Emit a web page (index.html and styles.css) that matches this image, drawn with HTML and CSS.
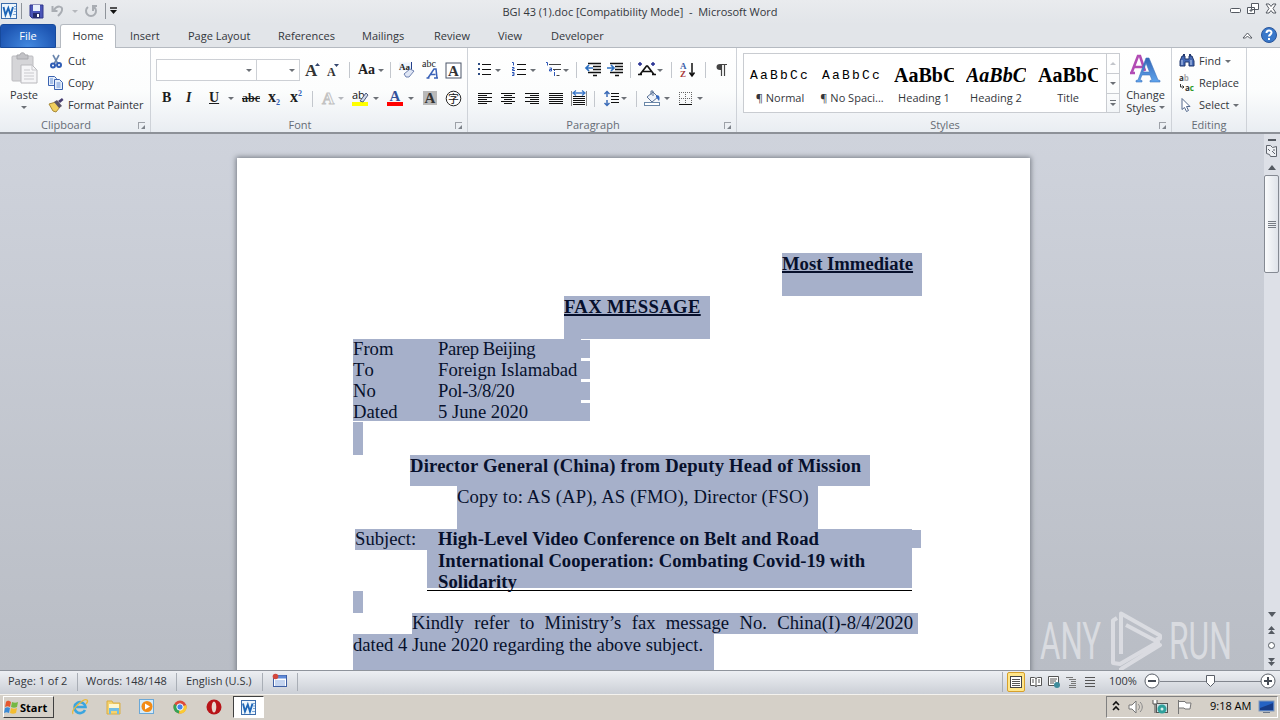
FILE: index.html
```html
<!DOCTYPE html>
<html lang="en">
<head>
  <meta charset="UTF-8" />
  <meta name="viewport" content="width=device-width, initial-scale=1.0"/>
  <title>BGI 43 (1).doc [Compatibility Mode] - Microsoft Word</title>
  <link rel="stylesheet" href="styles.css">
</head>
<body>
  <!-- Title bar -->
  <header class="titlebar">
    <div class="quick">
      <svg width="17" height="17" viewBox="0 0 17 17"><rect x="1.500" y=".5" width="15" height="15" fill="#eef6fc" stroke="#3b6cab"/><path d="M14 3.500h2M14 6h2M14 8.500h2M13 11.500h3" stroke="#7aa6d8"/><path d="M3.500 4l2 8L8.300 5l2.200 7 2.500-8" fill="none" stroke="#1d66b8" stroke-width="1.900"/></svg>
      <i class="sep"></i>
      <svg width="15" height="15" viewBox="0 0 15 15"><path d="M1 1h13v13H3l-2-2z" fill="#4a55b8" stroke="#30378a"/><path d="M4 1h7v6H4z" fill="#e8f0fb"/><path d="M4 9h7v5H4z" fill="#252c6c"/><path d="M8 10h2v3H8z" fill="#fff"/></svg>
      <svg width="14" height="14" viewBox="0 0 14 14"><path d="M1.500 2v5h5M3 6c3-5 9-4 8 0 0 2-2 4-4 6" fill="none" stroke="#a9adb3" stroke-width="2"/></svg>
      <i class="drop light"></i>
      <svg width="14" height="14" viewBox="0 0 14 14"><path d="M4 3a5 5 0 1 0 6 0M9 7V2h4" fill="none" stroke="#a9adb3" stroke-width="2"/></svg>
      <i class="sep"></i>
      <svg width="8" height="8" viewBox="0 0 8 8"><path d="M1 1h7" stroke="#111" stroke-width="1.4"/><path d="M1 3h7L4.500 7z" fill="#111"/></svg>
    </div>
    <div class="title">BGI 43 (1).doc [Compatibility Mode] &nbsp;-&nbsp; Microsoft Word</div>
    <svg class="winbuttons" width="50" height="14" viewBox="0 0 50 14" fill="#fff" stroke="#555a62"><rect x="0.500" y="5.500" width="10" height="4" rx="1"/><path d="M21.500.5h7v6h-7zM17.500 4.500h7v6h-7z"/><path d="M20 7h2v1h-2z"/><path d="M36 1h3l2 2.500L43 1h3l-3 4.500 3 4.500h-3l-2-2.500-2 2.500h-3l3-4.500z"/></svg>
  </header>

  <nav class="tabs">
    <span class="file">File</span>
    <span class="home">Home</span>
    <span>Insert</span>
    <span class="t-page">Page Layout</span>
    <span class="t-ref">References</span>
    <span>Mailings</span>
    <span>Review</span>
    <span>View</span>
    <span>Developer</span>
    <svg class="help" width="38" height="18" viewBox="0 0 38 18"><path d="M1 12l4.500-5L10 12H7.500l-2-2-2 2z" fill="#fff" stroke="#555a62"/><circle cx="27" cy="9" r="7.500" fill="#3978ca" stroke="#2a569b"/><path d="M24.500 7c0-3.500 5-3.300 5-.4 0 2-2.500 2-2.500 4M27 12v2" fill="none" stroke="#fff" stroke-width="2"/></svg>
  </nav>

  <!-- Ribbon -->
  <section class="ribbon">
    <div class="group clipboard">
      <div class="tools">
        <div class="paste">
          <svg width="27" height="31" viewBox="0 0 27 31"><rect x="1" y="3" width="21" height="25" rx="1" fill="#d5d5d8" stroke="#bcbcc0"/><path d="M6 2h3c0-3 5-3 5 0h3v4H6z" fill="#c2c2c6" stroke="#a9a9ad"/><path d="M10 12h11l5 5v13H10z" fill="#f5f5f7" stroke="#b9b9bd"/><path d="M21 12v5h5M13 17h6M13 20h10M13 23h10M13 26h10" stroke="#c9c9cd" fill="none"/></svg>
          <span>Paste</span>
          <i class="drop"></i>
        </div>
        <div class="stack">
          <div><svg width="16" height="16" viewBox="0 0 16 16"><path d="M5 2l5 9M11 2l-5 9" stroke="#6c87ae" stroke-width="1.600"/><circle cx="5" cy="12.500" r="2" fill="none" stroke="#2f5db5" stroke-width="2"/><circle cx="11" cy="12" r="2" fill="none" stroke="#2f5db5" stroke-width="2"/></svg>Cut</div>
          <div><svg width="16" height="16" viewBox="0 0 16 16" fill="#e6effb" stroke="#3a62b0"><path d="M.5 1.500h6l2 2v7h-8z"/><path d="M6.500 4.500h5l3 3v7h-8z"/><path d="M2 4h3M2 6h3M2 8h3M8.500 8h4M8.500 10h4M8.500 12h4" stroke="#6a92d4"/></svg>Copy</div>
          <div class="painter"><svg width="16" height="16" viewBox="0 0 16 16"><path d="M1 7l7-2 4 5-4 5-3-1z" fill="#f0cf5e" stroke="#a88a3a"/><path d="M6 5l3-2 5 6-3 2z" fill="#5a5468"/><path d="M10 4l4-3 1.500 2L12 6z" fill="#463d70"/></svg>Format Painter</div>
        </div>
      </div>
      <div class="label">Clipboard<i class="launcher"></i></div>
    </div>

    <div class="group font">
      <div class="tools rows">
        <div class="row font-top">
          <div class="combo"><i class="drop"></i></div>
          <div class="combo"><i class="drop"></i></div>
          <svg width="17" height="18" viewBox="0 0 17 18"><text x="0" y="15" class="svg-serif" font-size="17" font-weight="bold" fill="#333">A</text><path d="M10 5l2.500-3L15 5z" fill="#34466e"/></svg>
          <svg width="17" height="18" viewBox="0 0 17 18"><text x="0" y="15" class="svg-serif" font-size="12" font-weight="bold" fill="#333">A</text><path d="M7 3h5L9.500 6z" fill="#34466e"/></svg>
          <i class="sep"></i>
          <span class="serif aa">Aa</span>
          <i class="drop"></i>
          <i class="sep"></i>
          <svg width="17" height="18" viewBox="0 0 17 18"><path d="M1 1.500h12v8H1z" fill="#eef3fb"/><text x="1" y="9" class="svg-serif" font-size="9" font-weight="bold" fill="#222">Aa</text><path d="M13.500 1v8" stroke="#24408a"/><path d="M6 13l6-5 4 2-5 6H8z" fill="#dfe6f5" stroke="#6f82b0"/></svg>
          <svg width="17" height="18" viewBox="0 0 17 18"><text x="0" y="6" class="svg-serif" font-size="10" fill="#222">abc</text><path d="M6 17l6-9h2l1 9M8.500 13.500h5M4.500 17h3M12 17h4" fill="none" stroke="#3a62b8" stroke-width="1.500"/></svg>
          <svg width="17" height="17" viewBox="0 0 17 17"><rect x="1" y="1" width="15" height="15" fill="#fff" stroke="#4a5568"/><text x="3" y="13.500" class="svg-serif" font-size="15" font-weight="bold" fill="#333">A</text></svg>
        </div>
        <div class="row font-bottom">
          <span class="serif">B</span>
          <span class="serif italic">I</span>
          <span class="serif under">U</span>
          <i class="drop"></i>
          <span class="serif strike">abc</span>
          <span class="serif ex">x<sub>2</sub></span>
          <span class="serif ex">x<sup>2</sup></span>
          <i class="sep"></i>
          <svg width="16" height="17" viewBox="0 0 16 17"><text x="1" y="14" class="svg-serif" font-size="17" font-weight="bold" fill="#fafafa" stroke="#c2c2c2" stroke-width="1">A</text></svg>
          <i class="drop light"></i>
          <svg width="17" height="17" viewBox="0 0 17 17"><rect y="12" width="16" height="4" fill="#ff0"/><text x="0" y="9" class="svg-sans" font-size="11" fill="#111">ab</text><path d="M8 11l6-8 2 2-5 7z" fill="#cfd8ea" stroke="#506080"/></svg>
          <i class="drop"></i>
          <svg width="17" height="17" viewBox="0 0 17 17"><rect y="12" width="16" height="4" fill="#f00"/><text x="2.500" y="11" class="svg-serif" font-size="15" font-weight="bold" fill="#34519a">A</text></svg>
          <i class="drop"></i>
          <svg width="15" height="15" viewBox="0 0 15 15"><path d="M0 0h14v14H0z" fill="#b9b9b9"/><text x="1.500" y="12" class="svg-serif" font-size="15" font-weight="bold" fill="#333">A</text></svg>
          <svg width="17" height="17" viewBox="0 0 17 17"><circle cx="8.500" cy="8.500" r="7.300" fill="#fff" stroke="#222"/><text x="3" y="12.500" class="svg-cjk" font-size="11" fill="#111">字</text></svg>
        </div>
      </div>
      <div class="label">Font<i class="launcher"></i></div>
    </div>

    <div class="group paragraph">
      <div class="tools rows">
        <div class="row para-top">
          <svg width="16" height="16" viewBox="0 0 16 16"><path d="M1 1h2v2H1zM1 6h2v2H1zM1 11h2v2H1z" fill="#2c4a80"/><path d="M5 2.500h9M5 7.500h9M5 12.500h9" stroke="#111"/></svg>
          <i class="drop"></i>
          <svg width="16" height="16" viewBox="0 0 16 16"><path d="M1 .5h1.500v3M1 5.500h2v1.500H1.500v1.500H4M1 10.500h2v3H1M1.500 12H3" fill="none" stroke="#2c56b8"/><path d="M6 2.500h9M6 7.500h9M6 12.500h9" stroke="#111"/></svg>
          <i class="drop"></i>
          <svg width="18" height="16" viewBox="0 0 18 16"><path d="M1 .5h1.500v3M4.500 6h2v3h-2V7.500h2M9.500 10v4M9.500 8v1" fill="none" stroke="#2c56b8"/><path d="M4 2.500h12M8 7.500h8M11.500 13.500h3" stroke="#444"/></svg>
          <i class="drop"></i>
          <i class="sep"></i>
          <svg width="17" height="16" viewBox="0 0 17 16"><path d="M3 1.500h13M8 4.500h8M8 7.500h8M3 10.500h13M8 13.500h4" stroke="#111" stroke-width="1.500"/><path d="M8 6H2M4 3L1 6l3 3" fill="none" stroke="#2c6fc0" stroke-width="1.700"/></svg>
          <svg width="17" height="16" viewBox="0 0 17 16"><path d="M3 1.500h13M8 4.500h8M8 7.500h8M3 10.500h13M8 13.500h4" stroke="#111" stroke-width="1.500"/><path d="M0 6h6M4 3l3 3-3 3" fill="none" stroke="#2c6fc0" stroke-width="1.700"/></svg>
          <i class="sep"></i>
          <svg width="19" height="16" viewBox="0 0 19 16"><path d="M0 12.500h4M14 12.500h4M2 12.500L8.500 4h1L16 12.500M5 9.500h8" fill="none" stroke="#111" stroke-width="1.700"/><path d="M0 2h4M2 0v4M13 2h4M15 0v4" stroke="#202a90" stroke-width="1.400"/></svg>
          <i class="drop"></i>
          <i class="sep"></i>
          <svg width="16" height="18" viewBox="0 0 16 18"><text x="0" y="8" class="svg-serif" font-size="9" font-weight="bold" fill="#3c62aa">A</text><text x="0" y="16" class="svg-serif" font-size="9" font-weight="bold" fill="#a83a3a">Z</text><path d="M12 2v12M9.500 11.500L12 15l2.500-3.500" fill="none" stroke="#111" stroke-width="1.500"/></svg>
          <i class="sep"></i>
          <svg width="12" height="15" viewBox="0 0 12 15"><path d="M8 1H4a3.500 3 0 0 0 0 6h1V1" fill="#444"/><path d="M4 1.500h7M5.500 1v12M8.500 1v12" fill="none" stroke="#444" stroke-width="1.200"/></svg>
        </div>
        <div class="row para-bottom">
          <svg width="16" height="14" viewBox="0 0 16 14"><path d="M0 1.500h14M0 3.500h9M0 5.500h14M0 7.500h9M0 9.500h14M0 11.500h9" stroke="#111"/></svg>
          <svg width="16" height="14" viewBox="0 0 16 14"><path d="M0 1.500h14M3 3.500h8M0 5.500h14M3 7.500h8M0 9.500h14M3 11.500h8" stroke="#111"/></svg>
          <svg width="16" height="14" viewBox="0 0 16 14"><path d="M0 1.500h14M5 3.500h9M0 5.500h14M5 7.500h9M0 9.500h14M5 11.500h9" stroke="#111"/></svg>
          <svg width="16" height="14" viewBox="0 0 16 14"><path d="M0 1.500h14M0 3.500h14M0 5.500h14M0 7.500h14M0 9.500h14M0 11.500h14" stroke="#111"/></svg>
          <svg width="17" height="17" viewBox="0 0 17 17"><path d="M.5 1v15M15.500 1v15" stroke="#888"/><path d="M2 3h12M5 .5L2 3l3 2.500M11 .5L14 3l-3 2.500" fill="none" stroke="#3c78c8" stroke-width="1.300"/><path d="M2 6.500h12M2 8.500h12M2 10.500h12M2 12.500h12M2 14.500h12" stroke="#111"/></svg>
          <i class="sep"></i>
          <svg width="16" height="17" viewBox="0 0 16 17"><path d="M3 1v6M.5 4L3 1.500 5.500 4M3 10v6M.5 13L3 15.500 5.500 13" fill="none" stroke="#3c6cb8" stroke-width="1.500"/><path d="M7 3.500h8M7 6.500h8M7 9.500h8M7 12.500h8" stroke="#111"/></svg>
          <i class="drop"></i>
          <i class="sep"></i>
          <svg width="17" height="17" viewBox="0 0 17 17"><path d="M3 7l6-5 5 5-6 5z" fill="#eef3fa" stroke="#5a7296"/><path d="M7 5V1h2v5" fill="none" stroke="#5a7296"/><path d="M12 5c4 0 4 3 3 6l-3-4z" fill="#3568bd"/><rect x=".5" y="12.500" width="15" height="3" fill="#fff" stroke="#6a87a8"/></svg>
          <i class="drop"></i>
          <svg width="15" height="15" viewBox="0 0 15 15"><path d="M1.500 1v12M7.500 1v12M13.500 1v12M1 1.500h13M1 7.500h13" stroke="#666" stroke-dasharray="1 1"/><path d="M1 13.500h13" stroke="#111"/></svg>
          <i class="drop"></i>
        </div>
      </div>
      <div class="label">Paragraph<i class="launcher"></i></div>
    </div>

    <div class="group styles">
      <div class="tools">
        <div class="gallery">
          <div class="style"><b class="normal">AaBbCc</b><span>¶ Normal</span></div>
          <div class="style"><b class="normal">AaBbCc</b><span>¶ No Spaci...</span></div>
          <div class="style"><b>AaBbC</b><span>Heading 1</span></div>
          <div class="style"><b class="h2">AaBbCc</b><span>Heading 2</span></div>
          <div class="style"><b>AaBbC</b><span>Title</span></div>
        </div>
        <div class="gallery-scroll"><div><i class="drop up"></i></div><div><i class="drop"></i></div><div><i class="drop more"></i></div></div>
        <div class="change">
          <svg width="31" height="30" viewBox="0 0 31 30"><defs><linearGradient id="blueA" x2="0" y2="1"><stop offset="0" stop-color="#3465b4"/><stop offset="1" stop-color="#5fa5ee"/></linearGradient></defs><path d="M1.500 19L8 2h2l5 15M4 13h9M0 19h5" fill="none" stroke="#b24cb4" stroke-width="2.600"/><path d="M6 28h6v-1.500l-2-.5 2-5h8l2 5-2 .5V28h10v-1.500l-2-.5L19 4h-3L8 26l-2 .5zM13 18l3-9 3.500 9z" fill="url(#blueA)" stroke="#3c72bd" stroke-width=".6" fill-rule="evenodd"/></svg>
          <span>Change</span>
          <span>Styles <i class="drop"></i></span>
        </div>
      </div>
      <div class="label">Styles<i class="launcher"></i></div>
    </div>

    <div class="group editing">
      <div class="tools">
        <div class="stack">
          <div><svg width="16" height="16" viewBox="0 0 16 16"><path d="M3 3h3v3h4V3h3l2 5v5h-5V9H6v4H1V8z" fill="#4468b4" stroke="#23386e"/><path d="M4 1h2v2H4zM10 1h2v2h-2z" fill="#23386e"/><path d="M3 7v5M12 7v5" stroke="#c5d5f2"/></svg>Find<i class="drop"></i></div>
          <div><svg width="16" height="16" viewBox="0 0 16 16"><text x="0" y="6" class="svg-sans" font-size="8" font-weight="bold" fill="#333">a<tspan fill="#aaa">b</tspan></text><text x="6" y="16" class="svg-sans" font-size="8" font-weight="bold" fill="#333">a<tspan fill="#2a9a2a">c</tspan></text><path d="M1.500 9v3H5M3.500 10.500L5 12l-1.500 1.500" fill="none" stroke="#333"/></svg>Replace</div>
          <div><svg width="16" height="16" viewBox="0 0 16 16"><path d="M3 1.500v11l2.500-2 2 4 2-1-2-4H11z" fill="#fff" stroke="#54698e"/></svg>Select<i class="drop"></i></div>
        </div>
      </div>
      <div class="label">Editing</div>
    </div>
  </section>

  <!-- Document -->
  <main class="workspace">
    <div class="canvas">
      <article class="page">
        <h1 class="sel immediate"><u>Most Immediate</u></h1>
        <h2 class="sel fax"><u>FAX MESSAGE</u></h2>
        <div class="details">
          <div class="sel detail"><span>From</span><span class="parep">Parep Beijing</span></div>
          <div class="sel detail"><span class="to">To</span><span>Foreign Islamabad</span></div>
          <div class="sel detail"><span>No</span><span class="pol">Pol-3/8/20</span></div>
          <div class="sel detail"><span>Dated</span><span>5 June 2020</span></div>
        </div>
        <div class="sel mark first"></div>
        <h3 class="sel director">Director General (China) from Deputy Head of Mission</h3>
        <p class="sel copy">Copy to: AS (AP), AS (FMO), Director (FSO)</p>
        <div class="subject">
          <div class="sel subject-label">Subject:</div>
          <div class="sel subject-text"><div class="s1">High-Level Video Conference on Belt and Road</div><div class="s2">International Cooperation: Combating Covid-19 with</div><div class="s3">Solidarity</div></div>
          <div class="sel cell-end"></div>
        </div>
        <div class="sel mark second"></div>
        <p class="sel kindly">Kindly refer to Ministry’s fax message No. China(I)-8/4/2020</p>
        <p class="sel dated">dated 4 June 2020 regarding the above subject.</p>
      </article>
      <svg class="watermark" width="196" height="64" viewBox="0 0 196 64">
        <g class="mark-text"><text x="1" y="49" textLength="61" lengthAdjust="spacingAndGlyphs">ANY</text><text x="130" y="49" textLength="63" lengthAdjust="spacingAndGlyphs">RUN</text></g>
        <path d="M78 8l-4 2.500V53l7 1 38-22-32-17M82 44V3.500l39 22v3l-4 1M82 58v1l39-24-8 2" class="mark-line"/>
      </svg>
    </div>
    <aside class="scrollbar">
      <div class="split"></div>
      <svg class="ruler" width="15" height="17" viewBox="0 0 15 17" fill="#eef0f4" stroke="#60656e"><path d="M2.500 2.500h4l2 2 4-1v10h-6l-1-2-3-1z"/><path d="M4 6l2 2M8 8l3 3M10 6v2"/></svg>
      <div class="arrow"><i class="tri tri-up"></i></div>
      <div class="thumb"><i></i><i></i><i></i><i></i></div>
      <div class="track"></div>
      <div class="arrow"><i class="tri"></i></div>
      <svg class="browse" width="15" height="49" viewBox="0 0 15 49" fill="#555a62"><path d="M4 9l3.500-4L11 9zM4 13l3.500-4 3.500 4zM4 37h7l-3.500 4zM4 41h7l-3.500 4z"/><circle cx="7.500" cy="24.500" r="3" fill="#fff" stroke="#555a62"/></svg>
    </aside>
  </main>

  <footer class="status">
    <span>Page: 1 of 2</span>
    <span>Words: 148/148</span>
    <span class="lang">English (U.S.)</span>
    <span class="macro"><svg width="16" height="16" viewBox="0 0 16 16"><rect x="1.500" y="2.500" width="13" height="11" fill="#fff" stroke="#3e5fa4"/><path d="M2 4h12" stroke="#5f8ad8" stroke-width="3"/><path d="M3 8h10M3 10h10M3 12h10" stroke="#8aaae0"/><circle cx="3.500" cy="3.500" r="2.800" fill="#d3483d"/></svg></span>
    <div class="views">
      <div class="active"><svg width="14" height="14" viewBox="0 0 14 14"><rect x="1.500" y="1.500" width="11" height="11" fill="#fff" stroke="#444"/><path d="M3 4.500h8M3 6.500h8M3 8.500h8M3 10.500h8" stroke="#555"/></svg></div>
      <svg width="14" height="14" viewBox="0 0 14 14" fill="#fff" stroke="#555"><path d="M1.500 2.500h4l1.500 1 1.500-1h4v8h-4l-1.500 1-1.500-1h-4zM7 3v9M3 5h2M3 7h2M9 5h2M9 7h2"/></svg>
      <svg width="14" height="14" viewBox="0 0 14 14"><path d="M1.500 1.500h10v9h-10z" fill="#fff" stroke="#555"/><path d="M3 4h7M3 6h6M3 8h4" stroke="#555"/><circle cx="10" cy="10" r="3" fill="#3f8c9c"/></svg>
      <svg width="14" height="14" viewBox="0 0 14 14"><path d="M1 2.500h7M4 4.500h7M6 6.500h5M6 8.500h5M4 10.500h7M4 12.500h7" stroke="#777"/></svg>
      <svg width="14" height="14" viewBox="0 0 14 14"><path d="M2 2.500h10M2 5.500h10M2 8.500h10M2 11.500h10" stroke="#555"/></svg>
    </div>
    <span class="percent">100%</span>
    <svg class="zoom" width="136" height="18" viewBox="0 0 136 18"><path d="M16 8.500h106" stroke="#82868e"/><g fill="#fff" stroke="#5a5f68"><circle cx="8" cy="8" r="7"/><circle cx="124" cy="8" r="7"/><path d="M62.500 2.500h8v7l-4 4-4-4z"/></g><path d="M4 8h8M120 8h8M124 4v8" stroke="#444a54" stroke-width="2"/></svg>
  </footer>

  <!-- Windows taskbar -->
  <footer class="taskbar">
    <div class="start"><svg width="15" height="15" viewBox="0 0 15 15"><path d="M2 2c2-2 3-1 5 0L6 7C4 6 3 6 1 7z" fill="#e5572e"/><path d="M8 2c2 1 4 1 6 0l-1 5c-2 1-4 1-6 0z" fill="#75b843"/><path d="M1 8c2-1 3-1 5 0l-1 5c-2-1-3-1-5 0z" fill="#3a8ad6"/><path d="M7 8c2 1 4 1 6 0l-1 5c-2 1-4 1-6 0z" fill="#f4bd30"/></svg>Start</div>
    <svg width="18" height="18" viewBox="0 0 18 18"><path d="M14 12a5.500 5.500 0 1 1 .5-3H5" fill="none" stroke="#3ba5df" stroke-width="2.600"/><path d="M2 16C-1 12 13 0 16 2c1 1 0 3-1 4" fill="none" stroke="#e9b93b" stroke-width="1.300"/></svg>
    <svg width="18" height="18" viewBox="0 0 18 18"><path d="M2 3h5l1 2h7v11H2z" fill="#f5d36e" stroke="#d9ad45"/><path d="M4 6h10v4H4z" fill="#fff6cf"/><path d="M4 10h10v6h-2v-3H6v3H4z" fill="#72bde4"/></svg>
    <svg width="18" height="18" viewBox="0 0 18 18"><rect x="1.500" y="1.500" width="14" height="14" fill="#d5ebf9" stroke="#6ba8d7"/><circle cx="9" cy="8.500" r="5.500" fill="#f28b16"/><path d="M7 5.500v6l5-3z" fill="#fff"/></svg>
    <svg width="18" height="18" viewBox="0 0 18 18"><circle cx="8" cy="9" r="6.500" fill="#de4b3b"/><path d="M8 9L2.200 6A6.500 6.500 0 0 0 7 15.500z" fill="#35a455"/><path d="M8 9l6.300-2A6.500 6.500 0 0 1 7 15.500z" fill="#fbcb32"/><circle cx="8" cy="9" r="3.200" fill="#4285ec" stroke="#fff"/></svg>
    <svg width="18" height="18" viewBox="0 0 18 18"><ellipse cx="9" cy="9" rx="7.500" ry="7.500" fill="#b81418"/><ellipse cx="9" cy="9" rx="2.300" ry="5.500" fill="#e8d8d0"/></svg>
    <div class="word"><svg width="17" height="17" viewBox="0 0 17 17"><rect x="1.500" y="1.500" width="14" height="14" fill="#eef6fc" stroke="#3b6cab"/><path d="M13 4.500h2M13 7h2M13 9.500h2M12 12.500h3" stroke="#7aa6d8"/><path d="M3 4.500l2 8 2.800-7L10 12.500l2.500-8" fill="none" stroke="#1d66b8" stroke-width="1.900"/></svg></div>
    <div class="tray">
      <svg width="10" height="14" viewBox="0 0 10 14"><path d="M2 5l3-3 3 3M2 10l3-3 3 3" fill="none" stroke="#111" stroke-width="1.600"/></svg>
      <svg width="17" height="16" viewBox="0 0 17 16"><path d="M1 6h3l4-4v12l-4-4H1z" fill="#fff" stroke="#777"/><path d="M10 5c2 2 2 4 0 6M12 3c3 3 3 7 0 10" fill="none" stroke="#888"/></svg>
      <svg width="17" height="16" viewBox="0 0 17 16"><rect x="4.500" y="4.500" width="11" height="9" fill="#cfe3e6" stroke="#555"/><circle cx="10" cy="10" r="4.500" fill="#2fa09b"/><circle cx="10" cy="10" r="1.500" fill="#d5f0ee"/><path d="M1 1v4h4V1M3 5v9" stroke="#555" fill="#fff"/></svg>
      <svg width="17" height="16" viewBox="0 0 17 16"><path d="M2.500 1v14M3 2.500h6l1 1.500h5l-1 6H9L8 9H3" fill="#fff" stroke="#777"/></svg>
      <span>9:18 AM</span>
      <svg width="17" height="14" viewBox="0 0 17 14"><rect x="1" y="1" width="15" height="10" fill="#2462c4" stroke="#8297b8"/><path d="M2 8l13-5v7H2z" fill="#173c88"/><path d="M5 12.500h7" stroke="#6d7788"/></svg>
    </div>
  </footer>
</body>
</html>
```

FILE: styles.css
```css
* {
  box-sizing: border-box;
}

body {
  margin: 0;
  width: 1280px;
  height: 720px;
  overflow: hidden;
  font-family: "Open Sans", "Noto Sans", sans-serif;
  font-size: 11px;
  color: #33363b;
  background: #dfe2e7;
}

svg {
  display: block;
  flex: none;
  overflow: visible;
}

h1, h2, h3, p {
  margin: 0;
}

/* title bar */
.titlebar {
  position: relative;
  height: 24px;
  background: linear-gradient(#e9ebee, #e2e5e9);
}

.quick {
  display: grid;
  grid-template-columns: 21px 8px 22px 21px 12px 21px 4px 10px;
  align-items: center;
  height: 22px;
}

.title {
  position: absolute;
  left: 0;
  right: 0;
  top: 4px;
  text-align: center;
  line-height: 16px;
}

.winbuttons {
  position: absolute;
  right: 0;
  top: 3px;
}

.sep {
  display: block;
  width: 1px;
  height: 16px;
  background: #c3c7cd;
}

.titlebar .sep {
  background: #8f949b;
}

.drop {
  display: block;
  width: 0;
  border: 3px solid transparent;
  border-top-color: #6c7076;
  border-bottom: 0;
}

.drop.light {
  border-top-color: #b5b8bd;
}

/* tabs */
.tabs {
  position: relative;
  display: grid;
  grid-template-columns: 56px 4px 56px 14px 58px 90px 84px 72px 64px 53px 80px;
  height: 24px;
  line-height: 24px;
  background: #e2e5e9;
  border-bottom: 1px solid #b5bac1;
}

.tabs .file {
  height: 24px;
  color: #fff;
  text-align: center;
  background: radial-gradient(ellipse at bottom, #4389e0, #1d55b2 80%);
  border: 1px solid #174a9c;
  border-radius: 3px 3px 0 0;
  line-height: 22px;
}

.tabs .home {
  grid-column: 3;
  height: 24px;
  text-align: center;
  background: #fff;
  border: 1px solid #b5bac1;
  border-bottom: 0;
  border-radius: 3px 3px 0 0;
  line-height: 22px;
}

.tabs .home + span {
  grid-column: 5;
}

.help {
  position: absolute;
  right: 0;
  top: 2px;
}

/* ribbon */
.ribbon {
  display: flex;
  height: 86px;
  background: linear-gradient(#fff 0, #fcfdfd 50%, #e9edf2 100%);
  border-bottom: 2px solid #8d9198;
}

.group {
  display: flex;
  flex-direction: column;
  height: 84px;
  border-right: 1px solid #ced2d8;
}

.clipboard { width: 151px; }
.font { width: 317px; }
.paragraph { width: 269px; }
.styles { width: 435px; }
.editing { width: 75px; }

.tools {
  display: flex;
  height: 69px;
}

.label {
  position: relative;
  height: 15px;
  padding-right: 18px;
  text-align: center;
  line-height: 16px;
  color: #666c75;
}

.editing .label {
  padding: 0;
}

.launcher {
  position: absolute;
  right: 5px;
  top: 5px;
  width: 7px;
  height: 7px;
  border-top: 1px solid #9da1a8;
  border-left: 1px solid #9da1a8;
}

.launcher::after {
  content: "";
  position: absolute;
  right: 0;
  bottom: 0;
  border: 2px solid #7d828a;
  border-top-color: transparent;
  border-left-color: transparent;
}

.paste {
  display: flex;
  flex-direction: column;
  align-items: center;
  width: 48px;
  padding-top: 5px;
}

.paste span {
  line-height: 16px;
  margin: 3px 0;
}

.stack {
  display: flex;
  flex-direction: column;
  padding-top: 3px;
}

.stack div {
  display: flex;
  align-items: center;
  height: 22px;
  gap: 4px;
  line-height: 14px;
  padding-bottom: 2px;
}

.painter {
  letter-spacing: -0.1px;
}

.clipboard .stack {
  width: 101px;
  white-space: nowrap;
}

.editing .stack {
  padding-left: 7px;
  white-space: nowrap;
}

.rows {
  flex-direction: column;
  padding: 8px 0 0 5px;
}

.row {
  display: grid;
  align-items: center;
  height: 29px;
}

.row > * {
  min-width: 0;
}

.font-top {
  height: 28px;
  grid-template-columns: 101px 48px 22px 22px 9px 20px 12px 8px 24px 23px 18px;
}

.font-bottom {
  padding-left: 6px;
  grid-template-columns: 24px 23px 19px 14px 26px 22px 22px 9px 17px 14px 21px 14px 21px 15px 22px 18px;
}

.para-top {
  height: 28px;
  padding-left: 4px;
  grid-template-columns: 18px 16px 19px 15px 18px 13px 9px 22px 23px 8px 19px 14px 9px 25px 11px 12px;
}

.para-bottom {
  padding-left: 5px;
  grid-template-columns: 23px 24px 24px 22px 23px 10px 17px 15px 8px 20px 14px 19px 8px;
}

.combo {
  display: flex;
  align-items: center;
  justify-content: flex-end;
  height: 22px;
  padding-right: 4px;
  background: #fff;
  border: 1px solid #cdd0d5;
}

.combo + .combo {
  width: 43px;
  border-left: 0;
}

.serif {
  font-family: "Liberation Serif", serif;
  font-weight: bold;
  font-size: 14px;
  line-height: 16px;
  height: 17px;
  color: #1c1d20;
  white-space: nowrap;
}

.serif sup, .serif sub {
  font-size: 8px;
  line-height: 0;
  color: #2f5db5;
}

.serif sup { vertical-align: 6px; }
.serif sub { vertical-align: -3px; }

.aa { font-size: 14px; }
.italic { font-style: italic; }
.under { text-decoration: underline; }
.strike { font-size: 12px; text-decoration: line-through; }
.ex { font-size: 16px; line-height: 14px; }

.svg-serif { font-family: "Liberation Serif", serif; }
.svg-sans { font-family: "Open Sans", sans-serif; }
.svg-cjk { font-family: "Noto Sans CJK SC", sans-serif; }

/* style gallery */
.gallery {
  display: flex;
  width: 364px;
  height: 60px;
  margin: 5px 0 0 6px;
  background: #fff;
  border: 1px solid #c9ccd1;
}

.style {
  display: flex;
  flex-direction: column;
  align-items: center;
  width: 72px;
  padding-top: 9px;
  white-space: nowrap;
}

.style b {
  width: 60px;
  height: 26px;
  overflow: hidden;
  font: bold 20px/24px "Liberation Serif", serif;
  color: #000;
}

.style b.normal {
  overflow: visible;
  font: 13px/26px "Liberation Mono", monospace;
  letter-spacing: 2.2px;
}

.style b.h2 {
  font-style: italic;
}

.style span {
  line-height: 18px;
}

.gallery-scroll {
  width: 13px;
  height: 60px;
  margin-top: 5px;
  border: 1px solid #c9ccd1;
  border-left: 0;
}

.gallery-scroll div {
  display: flex;
  align-items: center;
  justify-content: center;
  height: 20px;
  border-bottom: 1px solid #c9ccd1;
}

.gallery-scroll div:last-child {
  border-bottom: 0;
}

.up {
  border-top: 0;
  border-bottom: 3px solid #c3c6cb;
}

.more {
  position: relative;
}

.more::before {
  content: "";
  position: absolute;
  left: -3px;
  top: -6px;
  width: 6px;
  height: 1px;
  background: #6c7076;
}

.change {
  display: flex;
  flex-direction: column;
  align-items: center;
  width: 51px;
  padding-top: 6px;
}

.change span {
  display: flex;
  align-items: center;
  gap: 3px;
  line-height: 13px;
}

.change svg {
  margin-bottom: 4px;
}

/* document */
.workspace {
  display: flex;
  height: 536px;
}

.canvas {
  position: relative;
  width: 1264px;
  overflow: hidden;
  background: linear-gradient(#cfd3dc, #b9bdc5);
}

.page {
  width: 793px;
  height: 600px;
  margin: 24px 0 0 237px;
  padding: 95px 108px 0 116px;
  background: #fff;
  box-shadow: 0 0 5px 1px #777c85;
  font: 18.67px/21px "Liberation Serif", serif;
  color: #07102c;
  white-space: nowrap;
}

.sel {
  background: #a6b0ca;
}

.page h1, .page h2, .page h3 {
  font-size: 18.67px;
  line-height: 22px;
}

.page u {
  text-decoration-thickness: 2px;
}

.immediate {
  width: 140px;
  height: 43px;
  margin-left: auto;
}

.fax {
  width: 146px;
  height: 43px;
  margin-left: 211px;
  letter-spacing: 0.35px;
}

.detail {
  position: relative;
  display: grid;
  grid-template-columns: 85px 143px;
  width: 228px;
  height: 21px;
  line-height: 20px;
}

.detail:last-child {
  height: 19px;
}

/* row end markers stick out past the table cells */
.detail::after {
  content: "";
  position: absolute;
  left: 228px;
  top: 1px;
  width: 9px;
  height: 18px;
  background: #a6b0ca;
}

.to { letter-spacing: 1.5px; }
.parep { letter-spacing: -0.38px; }
.pol { letter-spacing: -0.25px; }

.mark {
  width: 10px;
}

.first {
  height: 33px;
  margin-top: 1px;
}

.second {
  height: 22px;
}

.director {
  width: 460px;
  height: 31px;
  margin-left: 57px;
  letter-spacing: 0.18px;
}

.copy {
  width: 361px;
  height: 43px;
  margin-left: 104px;
  line-height: 22px;
  letter-spacing: 0.15px;
}

.subject {
  display: grid;
  grid-template-columns: 72px 485px 9px;
  align-items: start;
  height: 62px;
  margin-left: 2px;
}

.subject-label {
  height: 21px;
  line-height: 20px;
}

.subject-text {
  height: 59px;
  padding-left: 11px;
  font-weight: bold;
  line-height: 21px;
}

.s1 {
  height: 21px;
  line-height: 20px;
  letter-spacing: 0.07px;
}

.s3 {
  line-height: 22px;
}

.subject-text::after {
  content: "";
  display: block;
  height: 1px;
  margin: -3px 0 0 -11px;
  background: #000;
}

.cell-end {
  height: 18px;
  margin-top: 1px;
}

.kindly {
  width: 506px;
  height: 21px;
  margin-left: 59px;
  padding-right: 5px;
  line-height: 20px;
  text-align-last: justify;
}

.dated {
  width: 361px;
  height: 40px;
  line-height: 22px;
}

.watermark {
  position: absolute;
  left: 1039px;
  top: 476px;
}

.mark-text {
  font: 400 51px Roboto, sans-serif;
  fill: #dfe1e5;
  opacity: 0.85;
}

.mark-line {
  fill: none;
  stroke: #dfe1e5;
  stroke-width: 4px;
  stroke-linejoin: round;
  opacity: 0.85;
}

/* scroll bar */
.scrollbar {
  display: flex;
  flex-direction: column;
  width: 16px;
  background: #dde0e7;
}

.split {
  height: 3px;
  margin: 4px 4px 0;
  border-bottom: 2px solid #555a62;
}

.ruler {
  margin: 2px 0 0;
}

.arrow {
  display: flex;
  align-items: center;
  justify-content: center;
  height: 14px;
}

.tri {
  border: 4px solid transparent;
  border-top: 5px solid #555a62;
  border-bottom: 0;
}

.tri-up {
  border-top: 0;
  border-bottom: 5px solid #555a62;
}

.thumb {
  display: flex;
  flex-direction: column;
  align-items: center;
  justify-content: center;
  gap: 1px;
  width: 15px;
  height: 98px;
  margin-top: 1px;
  border: 1px solid #858a93;
  border-radius: 2px;
  background: linear-gradient(90deg, #fafbfc, #dfe3ea);
}

.thumb i {
  width: 8px;
  height: 1px;
  background: #777c85;
}

.track {
  flex: 1;
}

/* status bar */
.status {
  display: flex;
  align-items: center;
  height: 24px;
  padding-bottom: 2px;
  background: linear-gradient(#edeff3, #cbcfd6);
  border-top: 1px solid #8f949c;
}

.status > span {
  height: 18px;
  line-height: 16px;
  padding-left: 8px;
  border-right: 1px solid #a9aeb6;
  white-space: nowrap;
}

.status > span:nth-child(1) { width: 78px; }
.status > span:nth-child(2) { width: 99px; }
.status > .lang { width: 86px; }
.status > .macro { width: 35px; }

.status > .lang {
  padding-left: 9px;
}

.status > .macro {
  padding-left: 9px;
}

.views {
  display: flex;
  align-items: center;
  gap: 4px;
  height: 20px;
  margin-left: 704px;
  padding-left: 4px;
  border-left: 1px solid #a9aeb6;
}

.active {
  padding: 2px 1px;
  background: #ffe68a;
  border: 1px solid #d6a02c;
  border-radius: 2px;
}

.status > .percent {
  width: 47px;
  padding-left: 12px;
  border: 0;
}

/* taskbar */
.taskbar {
  display: grid;
  grid-template-columns: 68px 34px 33px 34px 33px 28px 873px 172px;
  align-items: center;
  height: 26px;
  padding: 0 0 1px 3px;
  background: #d5d0c8;
  border-top: 1px solid #f4f2ee;
}

.start {
  display: flex;
  align-items: center;
  gap: 1px;
  width: 51px;
  height: 22px;
  font: bold 11px "Open Sans", sans-serif;
  color: #000;
  border: 1px solid;
  border-color: #fff #404040 #404040 #fff;
}

.word {
  display: flex;
  align-items: center;
  justify-content: center;
  width: 31px;
  height: 22px;
  background: #fff;
  border: 1px solid;
  border-color: #404040 #fff #fff #404040;
}

.tray {
  display: flex;
  align-items: center;
  gap: 7px;
  width: 172px;
  height: 22px;
  padding-left: 4px;
  color: #000;
  border: 1px solid;
  border-color: #808080 #fff #fff #808080;
}

.tray span {
  margin-left: 10px;
  line-height: 14px;
  padding-bottom: 2px;
  white-space: nowrap;
}
```
